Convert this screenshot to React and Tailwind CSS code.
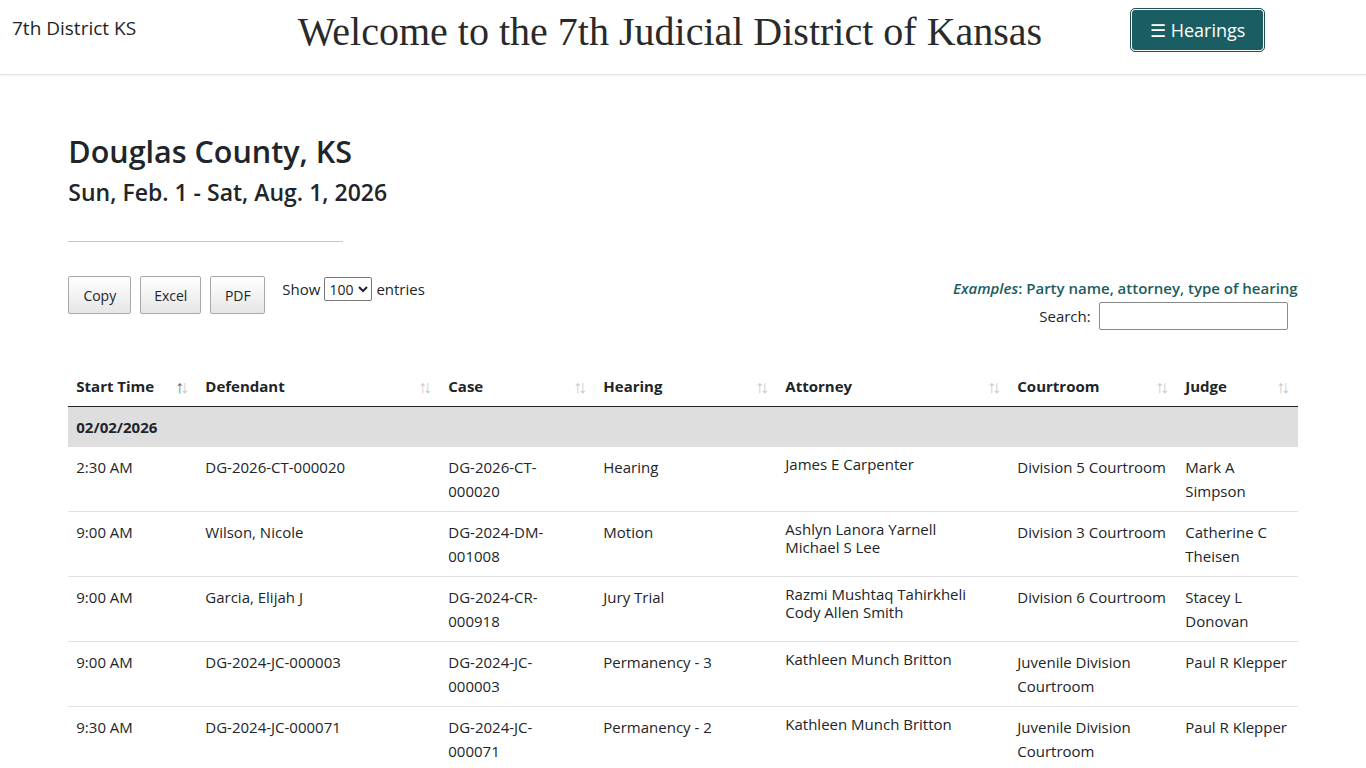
import { useState } from "react";

const columns = [
  { label: "Start Time", width: "w-[129px]", active: true },
  { label: "Defendant", width: "w-[243px]" },
  { label: "Case", width: "w-[155px]" },
  { label: "Hearing", width: "w-[182px]" },
  { label: "Attorney", width: "w-[232px]" },
  { label: "Courtroom", width: "w-[168px]" },
  { label: "Judge", width: "w-[121px]" },
];

const hearings = [
  {
    time: "2:30 AM",
    defendant: "DG-2026-CT-000020",
    caseNo: "DG-2026-CT-000020",
    hearing: "Hearing",
    attorneys: ["James E Carpenter"],
    courtroom: "Division 5 Courtroom",
    judge: "Mark A Simpson",
  },
  {
    time: "9:00 AM",
    defendant: "Wilson, Nicole",
    caseNo: "DG-2024-DM-001008",
    hearing: "Motion",
    attorneys: ["Ashlyn Lanora Yarnell", "Michael S Lee"],
    courtroom: "Division 3 Courtroom",
    judge: "Catherine C Theisen",
  },
  {
    time: "9:00 AM",
    defendant: "Garcia, Elijah J",
    caseNo: "DG-2024-CR-000918",
    hearing: "Jury Trial",
    attorneys: ["Razmi Mushtaq Tahirkheli", "Cody Allen Smith"],
    courtroom: "Division 6 Courtroom",
    judge: "Stacey L Donovan",
  },
  {
    time: "9:00 AM",
    defendant: "DG-2024-JC-000003",
    caseNo: "DG-2024-JC-000003",
    hearing: "Permanency - 3",
    attorneys: ["Kathleen Munch Britton"],
    courtroom: "Juvenile Division Courtroom",
    judge: "Paul R Klepper",
  },
  {
    time: "9:30 AM",
    defendant: "DG-2024-JC-000071",
    caseNo: "DG-2024-JC-000071",
    hearing: "Permanency - 2",
    attorneys: ["Kathleen Munch Britton"],
    courtroom: "Juvenile Division Courtroom",
    judge: "Paul R Klepper",
  },
  {
    time: "10:00 AM",
    defendant: "Miller, Aaron T",
    caseNo: "DG-2025-CR-000412",
    hearing: "Status Conference",
    attorneys: ["Joshua Seiden"],
    courtroom: "Division 1 Courtroom",
    judge: "Amy J Hanley",
  },
];

// small helper for the DataTables style export buttons
function ExportButton({ children, className }) {
  return (
    <button
      className={`h-[38px] rounded-[2px] border border-[#a8a8a8] bg-gradient-to-b from-white to-[#e6e6e6] text-[14px] text-[#212529] ${className}`}
    >
      {children}
    </button>
  );
}

function SortIcon({ active }) {
  return (
    <span className="absolute right-[8px] top-1/2 -translate-y-1/2 text-[18px] tracking-[-4px] leading-none select-none pr-[4px]">
      <span className={active ? "text-[#666]" : "text-[#c8c8c8]"}>↑</span>
      <span className="text-[#c8c8c8]">↓</span>
    </span>
  );
}

export default function App() {
  const [pageSize, setPageSize] = useState("100");
  const [search, setSearch] = useState("");

  return (
    <div className="min-h-screen bg-white text-[#212529] font-['Open_Sans','Noto_Sans',sans-serif]">
      {/* Navbar */}
      <header className="h-[75px] flex border-b border-[#e3e3e3] shadow-[0_1px_2px_rgba(0,0,0,0.05)]">
        <div className="w-[245px] pl-3 pt-[15px] text-[19px] leading-[26px]">7th District KS</div>
        <h1 className="flex-1 pt-[8px] text-center text-[40px] leading-[48px] font-['Liberation_Serif','DejaVu_Serif',serif] text-[#2a2a2a]">
          Welcome to the 7th Judicial District of Kansas
        </h1>
        <div className="w-[271px] pl-[36px] pt-[9px]">
          <button className="h-[42px] px-[18px] rounded-[4px] bg-[#1a5d63] text-white text-[18px] border border-white outline outline-1 outline-[#1f4f54]">
            ☰ Hearings
          </button>
        </div>
      </header>

      <main className="w-[90%] mx-auto pt-[57px] pb-10">
        <h2 className="text-[30.5px] leading-[38px] font-semibold mb-[8px]">Douglas County, KS</h2>
        <h4 className="text-[23px] leading-[29px] font-semibold">Sun, Feb. 1 - Sat, Aug. 1, 2026</h4>
        <hr className="mt-[34px] w-[275px] border-0 border-t border-[#c6c7c8]" />

        {/* Controls */}
        <div className="mt-[34px] flex justify-between">
          <div className="flex items-start">
            <div className="flex gap-[9px]">
              <ExportButton className="w-[63px]">Copy</ExportButton>
              <ExportButton className="w-[61px]">Excel</ExportButton>
              <ExportButton className="w-[55px]">PDF</ExportButton>
            </div>
            <label className="ml-[17px] flex items-center gap-[4px] text-[15px] leading-[26px]">
              Show
              <select
                value={pageSize}
                onChange={(e) => setPageSize(e.target.value)}
                className="h-[24px] w-[48px] border border-[#767676] rounded-[2px] bg-white text-[14px] pl-0"
              >
                <option value="10">10</option>
                <option value="25">25</option>
                <option value="50">50</option>
                <option value="100">100</option>
              </select>
              entries
            </label>
          </div>
          <div className="flex flex-col items-end pt-[2px]">
            <div className="text-[15px] leading-[20px] font-semibold text-[#1a5d63]">
              <em>Examples</em>: Party name, attorney, type of hearing
            </div>
            <label className="mt-[4px] mr-[10px] flex items-center gap-[8px] text-[15px]">
              Search:
              <input
                value={search}
                onChange={(e) => setSearch(e.target.value)}
                className="h-[28px] w-[189px] border border-[#8a8a8a] rounded-[2px] px-1"
              />
            </label>
          </div>
        </div>

        {/* Hearings table */}
        <table className="mt-[36px] w-full table-fixed border-collapse text-[15px]">
          <colgroup>
            {columns.map((c) => (
              <col key={c.label} className={c.width} />
            ))}
          </colgroup>
          <thead>
            <tr className="border-b border-[#212529]">
              {columns.map((c) => (
                <th key={c.label} className="relative px-2 py-2 text-left font-bold leading-[24px]">
                  {c.label}
                  <SortIcon active={c.active} />
                </th>
              ))}
            </tr>
          </thead>
          <tbody>
            <tr className="bg-[#dedede]">
              <td colSpan={7} className="px-2 py-2 font-bold leading-[24px]">02/02/2026</td>
            </tr>
            {hearings.map((h, i) => (
              <tr key={i} className="border-b border-[#dee2e6] align-top">
                <td className="px-2 py-2 leading-[24px]">{h.time}</td>
                <td className="px-2 py-2 leading-[24px]">{h.defendant}</td>
                <td className="px-2 py-2 leading-[24px]">
                  <div className="max-w-[128px]">{h.caseNo}</div>
                </td>
                <td className="px-2 py-2 leading-[24px]">{h.hearing}</td>
                <td className="px-2 py-2 leading-[18px]">
                  {h.attorneys.map((a) => (
                    <div key={a}>{a}</div>
                  ))}
                </td>
                <td className="px-2 py-2 leading-[24px]">{h.courtroom}</td>
                <td className="px-2 py-2 leading-[24px]">{h.judge}</td>
              </tr>
            ))}
          </tbody>
        </table>
      </main>
    </div>
  );
}
